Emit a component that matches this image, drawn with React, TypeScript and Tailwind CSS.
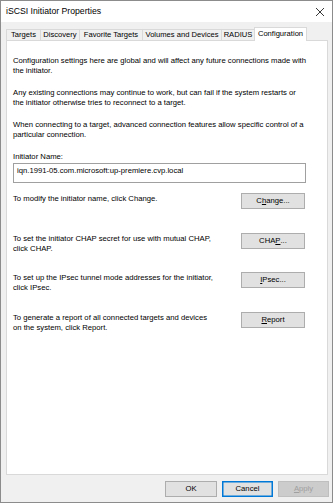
import React from 'react';

const TABS = [
  { label: 'Targets', w: 'w-[34px]' },
  { label: 'Discovery', w: 'w-[39px]' },
  { label: 'Favorite Targets', w: 'w-[63px]' },
  { label: 'Volumes and Devices', w: 'w-[79px]' },
  { label: 'RADIUS', w: 'w-[33px]' },
];

function Btn({ children, className = '' }: { children: React.ReactNode; className?: string }) {
  return (
    <div
      className={`flex items-center justify-center border text-[7.7px] leading-none ${className || 'bg-[#e1e1e1] border-[#adadad] text-black'}`}
    >
      {children}
    </div>
  );
}

function Row({ text, h, children }: { text: React.ReactNode; h: string; children: React.ReactNode }) {
  return (
    <div className={`flex justify-between w-[292px] ${h}`}>
      <p className="pt-px leading-[10px] whitespace-nowrap">{text}</p>
      <Btn className="bg-[#e1e1e1] border-[#adadad] text-black w-[64px] h-[16px]">{children}</Btn>
    </div>
  );
}

export default function App() {
  return (
    <div className="w-[333px] h-[503px] border border-[#8c8c8c] bg-[#f0f0f0] flex flex-col font-['Liberation_Sans',Arial,sans-serif] text-black">
      {/* title bar */}
      <div className="h-[21px] bg-white flex items-center justify-between pl-[5px] pr-[7px] shrink-0">
        <span className="text-[8.7px]">iSCSI Initiator Properties</span>
        <svg width="10" height="10" viewBox="0 0 10 10" className="text-[#222]">
          <path d="M1 1 L9 9 M9 1 L1 9" stroke="currentColor" strokeWidth="0.9" fill="none" />
        </svg>
      </div>

      <div className="flex-1 flex flex-col pl-[5px] pr-[4px]">
        {/* tabs */}
        <div className="h-[18px] flex items-end text-[7.6px] leading-none">
          {TABS.map(t => (
            <div
              key={t.label}
              className={`${t.w} h-[11px] border-t border-l border-[#d9d9d9] bg-[#f0f0f0] flex items-center justify-center whitespace-nowrap`}
            >
              {t.label}
            </div>
          ))}
          <div className="w-[53px] h-[14px] -mb-px relative z-10 bg-white border-t border-l border-r border-[#d9d9d9] flex items-center justify-center pb-px whitespace-nowrap">
            Configuration
          </div>
        </div>

        {/* panel */}
        <div className="h-[435px] bg-white border border-[#d9d9d9] pl-[6px] pt-[15px] text-[7.7px] leading-[10px]">
          <p className="whitespace-nowrap">
            Configuration settings here are global and will affect any future connections made with
            <br />
            the initiator.
          </p>
          <p className="mt-[12px] whitespace-nowrap">
            Any existing connections may continue to work, but can fail if the system restarts or
            <br />
            the initiator otherwise tries to reconnect to a target.
          </p>
          <p className="mt-[12px] whitespace-nowrap">
            When connecting to a target, advanced connection features allow specific control of a
            <br />
            particular connection.
          </p>
          <p className="mt-[12px]">Initiator Name:</p>
          <div className="mt-px w-[293px] h-[20px] border border-[#a0a0a0] pl-[3px] pt-[2px] leading-[10px]">
            iqn.1991-05.com.microsoft:up-premiere.cvp.local
          </div>

          <div className="mt-[10px] flex flex-col">
            <Row h="h-[40px]" text="To modify the initiator name, click Change.">
              C<span className="underline">h</span>ange...
            </Row>
            <Row
              h="h-[39px]"
              text={
                <>
                  To set the initiator CHAP secret for use with mutual CHAP,
                  <br />
                  click CHAP.
                </>
              }
            >
              CHA<span className="underline">P</span>...
            </Row>
            <Row
              h="h-[40px]"
              text={
                <>
                  To set up the IPsec tunnel mode addresses for the initiator,
                  <br />
                  click IPsec.
                </>
              }
            >
              <span className="underline">I</span>Psec...
            </Row>
            <Row
              h="h-[21px]"
              text={
                <>
                  To generate a report of all connected targets and devices
                  <br />
                  on the system, click Report.
                </>
              }
            >
              <span className="underline">R</span>eport
            </Row>
          </div>
        </div>

        {/* footer buttons */}
        <div className="flex justify-end gap-[5px] pt-[6px] pr-[-1px] -mr-px">
          <Btn className="w-[52px] h-[16px] bg-[#e1e1e1] border-[#adadad] text-black">OK</Btn>
          <Btn className="w-[51px] h-[16px] bg-[#e1e1e1] border-[#0078d7] text-black shadow-[inset_0_0_0_0.5px_#0078d7]">
            Cancel
          </Btn>
          <Btn className="w-[51px] h-[16px] bg-[#cccccc] border-[#bfbfbf] text-[#a0a0a0]">
            <span className="underline">A</span>pply
          </Btn>
        </div>
      </div>
    </div>
  );
}
